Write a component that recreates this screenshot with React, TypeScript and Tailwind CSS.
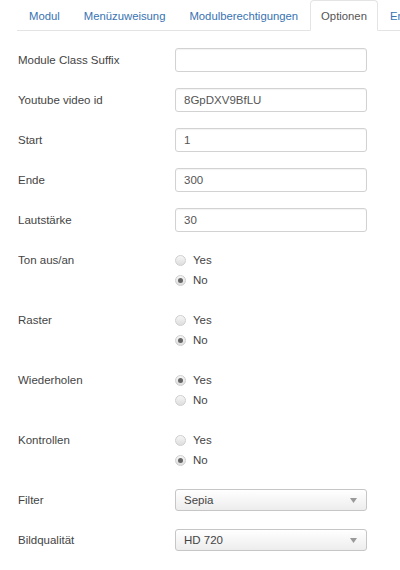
import React from 'react';

const font = { fontFamily: '"Liberation Sans", Arial, sans-serif' };

type Field =
  | { kind: 'text'; label: string; value: string }
  | { kind: 'radio'; label: string; value: 'Yes' | 'No' }
  | { kind: 'select'; label: string; value: string };

const fields: Field[] = [
  { kind: 'text', label: 'Module Class Suffix', value: '' },
  { kind: 'text', label: 'Youtube video id', value: '8GpDXV9BfLU' },
  { kind: 'text', label: 'Start', value: '1' },
  { kind: 'text', label: 'Ende', value: '300' },
  { kind: 'text', label: 'Lautstärke', value: '30' },
  { kind: 'radio', label: 'Ton aus/an', value: 'No' },
  { kind: 'radio', label: 'Raster', value: 'No' },
  { kind: 'radio', label: 'Wiederholen', value: 'Yes' },
  { kind: 'radio', label: 'Kontrollen', value: 'No' },
  { kind: 'select', label: 'Filter', value: 'Sepia' },
  { kind: 'select', label: 'Bildqualität', value: 'HD 720' },
];

const tabs = ['Modul', 'Menüzuweisung', 'Modulberechtigungen', 'Optionen', 'Erweitert'];

const Radio = ({ checked, label }: { checked: boolean; label: string }) => (
  <div className="flex h-[20px] items-center">
    <span className="flex h-[11px] w-[11px] items-center justify-center rounded-full border border-[#cfcfcf] bg-gradient-to-b from-[#f6f6f6] to-[#dedede]">
      {checked && <span className="h-[5px] w-[5px] rounded-full bg-[#666]" />}
    </span>
    <span className="ml-[7px] pt-[1px] text-[#444]">{label}</span>
  </div>
);

export default function App() {
  return (
    <div className="h-[570px] w-[400px] overflow-hidden bg-white text-[11.5px]" style={font}>
      {/* Tabs */}
      <div className="ml-[17px] flex h-[31px] items-end whitespace-nowrap border-b border-[#e4e4e4] text-[11.3px]">
        {tabs.map((t) =>
          t === 'Optionen' ? (
            <div
              key={t}
              className="-mb-px flex h-[31px] items-center rounded-t-[4px] border border-b-white border-[#e4e4e4] bg-white px-[10px] pt-[2px] text-[#555]"
            >
              {t}
            </div>
          ) : (
            <div key={t} className="flex h-[30px] items-center px-[12px] pt-[2px] text-[#3873b3]">
              {t}
            </div>
          )
        )}
      </div>

      {/* Form */}
      <div className="pl-[18px] pt-[17px] text-[#444]">
        {fields.map((f, i) => {
          if (f.kind === 'text') {
            return (
              <div key={i} className="mb-[16px] flex h-[24px] items-center">
                <div className="w-[157px] pt-[1px]">{f.label}</div>
                <div className="flex h-[24px] w-[192px] items-center rounded-[3px] border border-[#d2d2d2] px-[8px] pt-[1px] text-[#555] shadow-[inset_0_1px_1px_rgba(0,0,0,0.05)]">
                  {f.value}
                </div>
              </div>
            );
          }
          if (f.kind === 'radio') {
            return (
              <div key={i} className={`flex py-[2px] ${i === 8 ? 'mb-[17px]' : 'mb-[16px]'}`}>
                <div className="flex h-[20px] w-[157px] items-center pt-[1px]">{f.label}</div>
                <div className="flex flex-col">
                  <Radio checked={f.value === 'Yes'} label="Yes" />
                  <Radio checked={f.value === 'No'} label="No" />
                </div>
              </div>
            );
          }
          return (
            <div key={i} className="mb-[18px] flex h-[22px] items-center">
              <div className="w-[157px] pt-[1px]">{f.label}</div>
              <div className="flex h-[22px] w-[192px] items-center justify-between rounded-[3px] border border-[#c6c6c6] bg-gradient-to-b from-white to-[#ededed] pl-[8px] pr-[9px]">
                <span className="pt-[1px]">{f.value}</span>
                <svg width="7" height="5" viewBox="0 0 7 5">
                  <path d="M0 0 H7 L3.5 5 Z" fill="#999" />
                </svg>
              </div>
            </div>
          );
        })}
      </div>
    </div>
  );
}
